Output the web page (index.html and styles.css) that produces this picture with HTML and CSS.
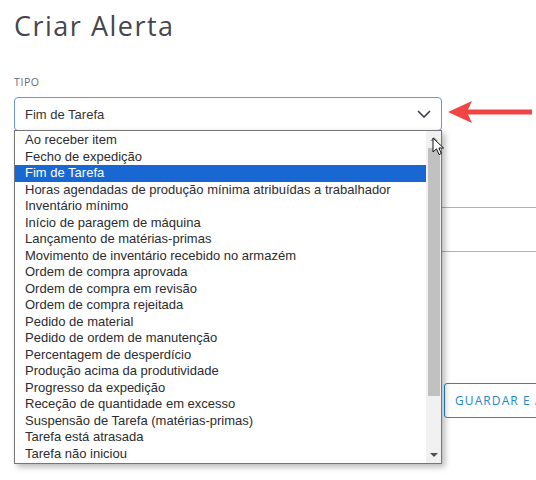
FILE: index.html
```html
<!DOCTYPE html>
<html lang="pt">
<head>
<meta charset="utf-8">
<title>Criar Alerta</title>
<link rel="stylesheet" href="styles.css">
</head>
<body>
<div class="page">
  <h1 class="title">Criar Alerta</h1>
  <div class="field">
    <div class="label">TIPO</div>
    <div class="select-wrap">
      <div class="select">
        <span class="select-value">Fim de Tarefa</span>
        <svg class="chevron" width="14" height="8" viewBox="0 0 14 8"><path d="M1 1 L7 7 L13 1" fill="none" stroke="#3c3c44" stroke-width="1.6"/></svg>
      </div>
      <svg class="callout" width="90" height="26" viewBox="0 0 90 26"><path d="M2 13 L26 2 L22 10.5 L86 10.5 L86 15.5 L22 15.5 L26 24 Z" fill="#f14444"/></svg>
      <div class="dropdown">
        <ul class="options">
          <li>Ao receber item</li>
          <li>Fecho de expedição</li>
          <li class="selected">Fim de Tarefa</li>
          <li>Horas agendadas de produção mínima atribuídas a trabalhador</li>
          <li>Inventário mínimo</li>
          <li>Início de paragem de máquina</li>
          <li>Lançamento de matérias-primas</li>
          <li>Movimento de inventário recebido no armazém</li>
          <li>Ordem de compra aprovada</li>
          <li>Ordem de compra em revisão</li>
          <li>Ordem de compra rejeitada</li>
          <li>Pedido de material</li>
          <li>Pedido de ordem de manutenção</li>
          <li>Percentagem de desperdício</li>
          <li>Produção acima da produtividade</li>
          <li>Progresso da expedição</li>
          <li>Receção de quantidade em excesso</li>
          <li>Suspensão de Tarefa (matérias-primas)</li>
          <li>Tarefa está atrasada</li>
          <li>Tarefa não iniciou</li>
        </ul>
        <div class="scrollbar">
          <div class="sb-up"></div>
          <div class="sb-thumb"></div>
          <div class="sb-down"></div>
        </div>
      </div>
      <svg class="cursor" width="14" height="20" viewBox="0 0 14 20"><path d="M1 1 L1 15 L4.5 11.8 L7 17.5 L9.3 16.5 L6.9 11 L11.5 11 Z" fill="#fff" stroke="#111" stroke-width="1"/></svg>
    </div>
  </div>
  <div class="input-box"></div>
  <div class="actions">
    <div class="btn">GUARDAR E A</div>
  </div>
</div>
</body>
</html>
```
FILE: styles.css
```css
html, body {
  margin: 0;
  padding: 0;
  background: #ffffff;
  overflow: hidden;
}
.page {
  width: 536px;
  height: 480px;
  padding-left: 14px;
  box-sizing: border-box;
  font-family: "Open Sans", "Noto Sans", sans-serif;
}
.title {
  margin: 0;
  padding-top: 8px;
  height: 42px;
  line-height: 36px;
  font-size: 27px;
  font-weight: 400;
  letter-spacing: 1.5px;
  color: #46464c;
}
.field {
  margin-top: 25px;
}
.label {
  font-size: 10.5px;
  line-height: 14px;
  letter-spacing: 0.6px;
  color: #6a667c;
  height: 22px;
}
.select-wrap {
  position: relative;
  width: 428px;
}
.select {
  height: 34px;
  box-sizing: border-box;
  border: 1px solid #6e93da;
  border-radius: 4px;
  display: flex;
  align-items: center;
  justify-content: space-between;
  padding: 0 10px 0 10px;
  background: #fff;
}
.select-value {
  font-family: "Liberation Sans", Arial, sans-serif;
  font-size: 13px;
  color: #333;
}
.callout {
  position: absolute;
  left: 432px;
  top: 2px;
}
.dropdown {
  position: absolute;
  left: 0;
  top: 33px;
  width: 428px;
  height: 334px;
  box-sizing: border-box;
  border: 1px solid #767676;
  background: #fff;
  display: flex;
  box-shadow: 3px 3px 6px rgba(0, 0, 0, 0.28);
  z-index: 2;
}
.options {
  list-style: none;
  margin: 0;
  padding: 1px 0 0 0;
  flex: 1;
  font-family: "Liberation Sans", Arial, sans-serif;
  font-size: 13px;
  color: #2c2c30;
}
.options li {
  height: 16.5px;
  line-height: 16.5px;
  padding-left: 10px;
  white-space: nowrap;
  overflow: hidden;
}
.options li.selected {
  background: #1967d2;
  color: #fff;
}
.scrollbar {
  width: 15px;
  background: #f1f1f1;
  display: flex;
  flex-direction: column;
  align-items: center;
}
.sb-up {
  height: 17px;
  width: 0;
  position: relative;
}
.sb-up::after {
  content: "";
  position: absolute;
  top: 6px;
  left: -4px;
  border-left: 4px solid transparent;
  border-right: 4px solid transparent;
  border-bottom: 4px solid #a3a3a3;
}
.sb-thumb {
  width: 12px;
  height: 248px;
  background: #c1c1c1;
}
.sb-down {
  flex: 1;
  width: 0;
  position: relative;
}
.sb-down::after {
  content: "";
  position: absolute;
  bottom: 6px;
  left: -4px;
  border-left: 4px solid transparent;
  border-right: 4px solid transparent;
  border-top: 4px solid #505050;
}
.cursor {
  position: absolute;
  left: 418px;
  top: 40px;
  z-index: 3;
}
.input-box {
  margin-top: 76px;
  height: 45px;
  width: 522px;
  box-sizing: border-box;
  border-top: 1px solid #b2b2ba;
  border-bottom: 1px solid #b2b2ba;
}
.actions {
  margin-top: 131px;
  padding-left: 430px;
  width: 200px;
}
.btn {
  height: 35px;
  box-sizing: border-box;
  display: flex;
  align-items: center;
  padding: 0 10px;
  background: #fff;
  border: 1px solid #2288cf;
  border-radius: 3px;
  color: #2288cf;
  font-family: "Open Sans", "Noto Sans", sans-serif;
  font-size: 12px;
  letter-spacing: 1.1px;
  white-space: nowrap;
}
```
